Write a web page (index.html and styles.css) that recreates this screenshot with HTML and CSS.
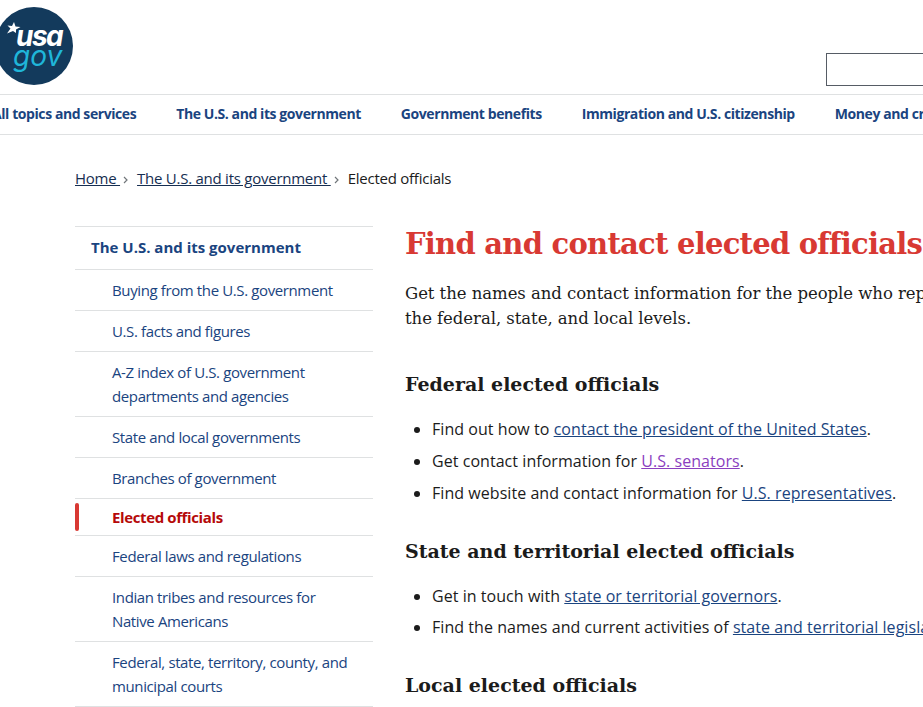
FILE: index.html
```html
<!DOCTYPE html>
<html lang="en">
  <head>
    <meta charset="UTF-8" />
    <title>Find and contact elected officials | USAGov</title>
    <link rel="stylesheet" href="styles.css">
  </head>
  <body>
    <header class="top">
      <a class="logo" href="#">
        <svg width="78" height="78" viewBox="0 0 78 78">
          <circle cx="39" cy="39" r="39" fill="#133a5c"/>
          <path d="M19 15L20.500 19.500l5 .5-4.500 2.500 0 3.500-3-2L12 26.500l3.500-5L12.500 18.500l4.500 .5z" fill="#fff"/>
          <text class="logo-usa" x="21" y="39">usa</text>
          <text class="logo-gov" x="18" y="59">gov</text>
        </svg>
      </a>
      <input class="search" type="text" aria-label="Search">
    </header>
    <nav class="topnav">
      <a href="#">All topics and services</a>
      <a href="#">The U.S. and its government</a>
      <a href="#">Government benefits</a>
      <a href="#">Immigration and U.S. citizenship</a>
      <a href="#">Money and credit</a>
    </nav>
    <div class="breadcrumb">
      <a href="#">Home&nbsp;</a>
      <svg class="chev" width="5" height="8" viewBox="0 0 5 8"><path d="M1 1l3 3-3 3" fill="none" stroke="#71767a" stroke-width="1.200"/></svg>
      <a href="#">The U.S. and its government&nbsp;</a>
      <svg class="chev" width="5" height="8" viewBox="0 0 5 8"><path d="M1 1l3 3-3 3" fill="none" stroke="#71767a" stroke-width="1.200"/></svg>
      <span>Elected officials</span>
    </div>
    <div class="layout">
      <aside class="side">
        <a class="side-title" href="#">The U.S. and its government</a>
        <a class="side-item" href="#">Buying from the U.S. government</a>
        <a class="side-item" href="#">U.S. facts and figures</a>
        <a class="side-item" href="#">A-Z index of U.S. government departments and agencies</a>
        <a class="side-item" href="#">State and local governments</a>
        <a class="side-item" href="#">Branches of government</a>
        <a class="side-item current" href="#">Elected officials</a>
        <a class="side-item" href="#">Federal laws and regulations</a>
        <a class="side-item" href="#">Indian tribes and resources for Native Americans</a>
        <a class="side-item" href="#">Federal, state, territory, county, and municipal courts</a>
      </aside>
      <main class="content">
        <h1>Find and contact elected officials</h1>
        <p class="intro">Get the names and contact information for the people who represent you at<br>the federal, state, and local levels.</p>
        <h2>Federal elected officials</h2>
        <ul>
          <li>Find out how to <a href="#">contact the president of the United States</a>.</li>
          <li>Get contact information for <a class="visited" href="#">U.S. senators</a>.</li>
          <li>Find website and contact information for <a href="#">U.S. representatives</a>.</li>
        </ul>
        <h2>State and territorial elected officials</h2>
        <ul>
          <li>Get in touch with <a href="#">state or territorial governors</a>.</li>
          <li>Find the names and current activities of <a href="#">state and territorial legislators</a>.</li>
        </ul>
        <h2>Local elected officials</h2>
      </main>
    </div>
  </body>
</html>
```

FILE: styles.css
```css
*{
    box-sizing: border-box;
    margin: 0;
    padding: 0;
}
html, body{
    height: 707px;
    overflow: hidden;
}
body{
    font-family: "Open Sans", sans-serif;
    font-size: 15px;
    letter-spacing: -0.25px;
    color: #1b1b1b;
    background: #fff;
}
a{
    color: #162e51;
}
.top{
    height: 95px;
    padding-top: 7px;
    display: flex;
    justify-content: space-between;
    align-items: flex-start;
    margin-left: -5px;
    margin-right: -60px;
    border-bottom: 1px solid #dfe1e2;
}
.logo{
    display: block;
    height: 78px;
}
.logo-usa,
.logo-gov{
    font-family: "Inter", sans-serif;
    font-size: 28px;
    font-style: italic;
}
.logo-usa{
    font-weight: 700;
    letter-spacing: -1.500px;
    fill: #fff;
}
.logo-gov{
    font-weight: 400;
    letter-spacing: 0;
    fill: #1fb6d9;
}
.search{
    width: 157px;
    height: 33px;
    margin-top: 46px;
    border: 1px solid #565c65;
    background: #fff;
}
.topnav{
    height: 40px;
    display: flex;
    align-items: center;
    gap: 40px;
    margin-left: -8px;
    padding-bottom: 2px;
    white-space: nowrap;
    border-bottom: 1px solid #dfe1e2;
}
.topnav a{
    font-weight: 700;
    font-size: 14px;
    letter-spacing: -0.42px;
    text-decoration: none;
    color: #1a4480;
}
.breadcrumb{
    padding: 33px 0 0 75px;
    height: 91px;
    display: flex;
    align-items: flex-start;
    line-height: 20px;
    white-space: nowrap;
}
.chev{
    margin: 8px 9px 0 3px;
}
.layout{
    display: flex;
    gap: 32px;
    padding-left: 75px;
}
.side{
    width: 298px;
    flex: none;
    border-top: 1px solid #dfe1e2;
}
.side a{
    display: block;
    text-decoration: none;
    color: #1a4480;
    line-height: 24px;
    letter-spacing: -0.38px;
    border-bottom: 1px solid #dfe1e2;
}
.side .side-title{
    padding: 8px 16px 10px;
    font-weight: 700;
    letter-spacing: 0;
}
.side-item{
    padding: 8px 16px 8px 37px;
}
.side .current{
    position: relative;
    padding-top: 6px;
    padding-bottom: 6px;
    font-weight: 700;
    color: #b50909;
}
.current::before{
    content: '';
    position: absolute;
    left: 0;
    top: 4px;
    bottom: 4px;
    width: 4px;
    border-radius: 2px;
    background: #d83933;
}
.content{
    flex: none;
    width: 600px;
    white-space: nowrap;
    letter-spacing: 0;
}
h1,
h2,
.intro{
    font-family: "DejaVu Serif", serif;
}
h1{
    font-size: 29px;
    letter-spacing: -0.75px;
    line-height: 36px;
    color: #d83933;
}
.intro{
    margin-top: 19px;
    margin-bottom: 39px;
    font-size: 16.500px;
    letter-spacing: -0.05px;
    line-height: 25px;
}
h2{
    margin-top: 32px;
    font-size: 19px;
    line-height: 28px;
}
ul{
    margin-top: 19px;
    padding-left: 27px;
    font-size: 16px;
    letter-spacing: 0.05px;
}
li{
    line-height: 24px;
    margin-bottom: 7.750px;
}
.content a{
    color: #1a4480;
}
.content a.visited{
    color: #8b3fbf;
}
```
